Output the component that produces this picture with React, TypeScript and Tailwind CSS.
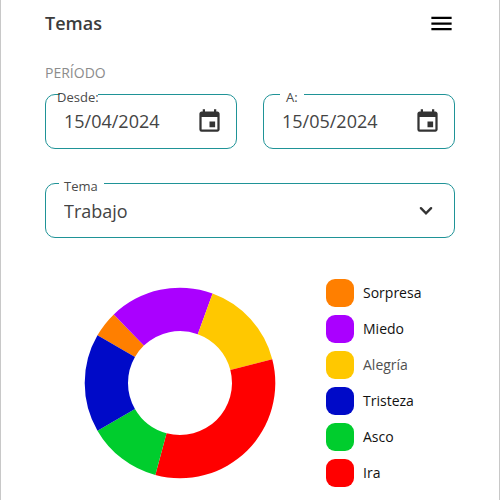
import { useState, type ReactNode } from "react";
import { MdEvent, MdMenu } from "react-icons/md";

interface Emotion {
  name: string;
  color: string;
  degrees: number;
  muted?: boolean;
}

// Legend order, top to bottom
const EMOTIONS: Emotion[] = [
  { name: "Sorpresa", color: "#ff7f00", degrees: 16 },
  { name: "Miedo", color: "#aa00ff", degrees: 64 },
  { name: "Alegría", color: "#ffc800", degrees: 55.5, muted: true },
  { name: "Tristeza", color: "#000ac8", degrees: 60 },
  { name: "Asco", color: "#00cd2d", degrees: 45 },
  { name: "Ira", color: "#ff0000", degrees: 119.5 },
];

// Clockwise order of the slices in the ring, as indexes into EMOTIONS
const RING_ORDER = [0, 1, 2, 5, 4, 3];
const RING_START = 300;

function point(angle: number, radius: number) {
  const rad = ((angle - 90) * Math.PI) / 180;
  return `${radius * Math.cos(rad)} ${radius * Math.sin(rad)}`;
}

function slicePath(from: number, to: number, outer: number, inner: number) {
  const large = to - from > 180 ? 1 : 0;
  return [
    `M ${point(from, outer)}`,
    `A ${outer} ${outer} 0 ${large} 1 ${point(to, outer)}`,
    `L ${point(to, inner)}`,
    `A ${inner} ${inner} 0 ${large} 0 ${point(from, inner)}`,
    "Z",
  ].join(" ");
}

function DonutChart() {
  let angle = RING_START;

  return (
    <svg viewBox="-96 -96 192 192" className="size-48 shrink-0" role="img" aria-label="Emociones">
      {RING_ORDER.map((index) => {
        const { name, color, degrees } = EMOTIONS[index];
        const from = angle;
        angle += degrees;
        return <path key={name} d={slicePath(from, angle, 95.3, 52)} fill={color} />;
      })}
    </svg>
  );
}

function ChevronIcon() {
  return (
    <svg
      viewBox="0 0 24 24"
      aria-hidden="true"
      className="pointer-events-none absolute right-4 size-6 text-[#333333]"
      fill="none"
      stroke="currentColor"
      strokeWidth="2.4"
      strokeLinecap="round"
      strokeLinejoin="miter"
    >
      <path d="M6.9 9.2 12 14.3l5.1-5.1" />
    </svg>
  );
}

interface FieldProps {
  id: string;
  label: string;
  labelClass: string;
  notchClass: string;
  children: ReactNode;
}

// Outlined field: the notch hides the border behind the floating label
function Field({ id, label, labelClass, notchClass, children }: FieldProps) {
  return (
    <div className="relative flex h-[55px] min-w-0 items-center rounded-[10px] border border-[#1f9397]">
      <span aria-hidden="true" className={`absolute -top-px h-px bg-white ${notchClass}`} />
      <label htmlFor={id} className={`absolute -top-2 text-[13px] leading-5 text-[#4a4a4a] ${labelClass}`}>
        {label}
      </label>
      {children}
    </div>
  );
}

interface DateInputProps {
  id: string;
  value: string;
  onChange: (value: string) => void;
}

function DateInput({ id, value, onChange }: DateInputProps) {
  return (
    <>
      <input
        id={id}
        type="text"
        value={value}
        onChange={(e) => onChange(e.target.value)}
        className="h-full min-w-0 flex-1 bg-transparent pb-0.5 pl-[18px] text-lg text-[#444444] outline-none"
      />
      <button type="button" aria-label="Abrir calendario" className="mr-[13px] shrink-0 text-[#333333]">
        <MdEvent size={27} />
      </button>
    </>
  );
}

export default function App() {
  const [from, setFrom] = useState("15/04/2024");
  const [to, setTo] = useState("15/05/2024");
  const [topic, setTopic] = useState("Trabajo");

  return (
    <div className="min-h-screen border-x border-[#c8c8c8] bg-white px-11 font-['Open_Sans',sans-serif] text-[#444444]">
      <header className="flex h-[46px] items-center justify-between">
        <h1 className="text-lg font-semibold text-[#3c3c3c]">Temas</h1>
        <button type="button" aria-label="Menú" className="text-black">
          <MdMenu size={27} />
        </button>
      </header>

      <main>
        <h2 className="mt-[17px] text-sm leading-5 text-[#8c8c8c]">PERÍODO</h2>

        <div className="mt-[11px] grid grid-cols-2 gap-[26px]">
          <Field id="desde" label="Desde:" labelClass="left-[11px]" notchClass="left-[14px] w-[38px]">
            <DateInput id="desde" value={from} onChange={setFrom} />
          </Field>
          <Field id="hasta" label="A:" labelClass="left-[22px]" notchClass="left-4 w-6">
            <DateInput id="hasta" value={to} onChange={setTo} />
          </Field>
        </div>

        <div className="mt-[34px]">
          <Field id="tema" label="Tema" labelClass="left-[18px]" notchClass="left-[13px] w-[45px]">
            <select
              id="tema"
              value={topic}
              onChange={(e) => setTopic(e.target.value)}
              className="h-full w-full appearance-none bg-transparent pl-[18px] text-lg text-[#444444] outline-none"
            >
              <option>Trabajo</option>
              <option>Familia</option>
              <option>Amigos</option>
            </select>
            <ChevronIcon />
          </Field>
        </div>

        <section className="mt-[41px] flex items-center gap-[50px] pl-[39px]">
          <DonutChart />
          <ul className="flex flex-col gap-2">
            {EMOTIONS.map(({ name, color, muted }) => (
              <li key={name} className="flex items-center gap-[9px]">
                <span className="size-7 rounded-[9px]" style={{ backgroundColor: color }} />
                <span className={muted ? "text-sm text-[#505050]" : "text-sm text-[#111111]"}>{name}</span>
              </li>
            ))}
          </ul>
        </section>
      </main>
    </div>
  );
}
